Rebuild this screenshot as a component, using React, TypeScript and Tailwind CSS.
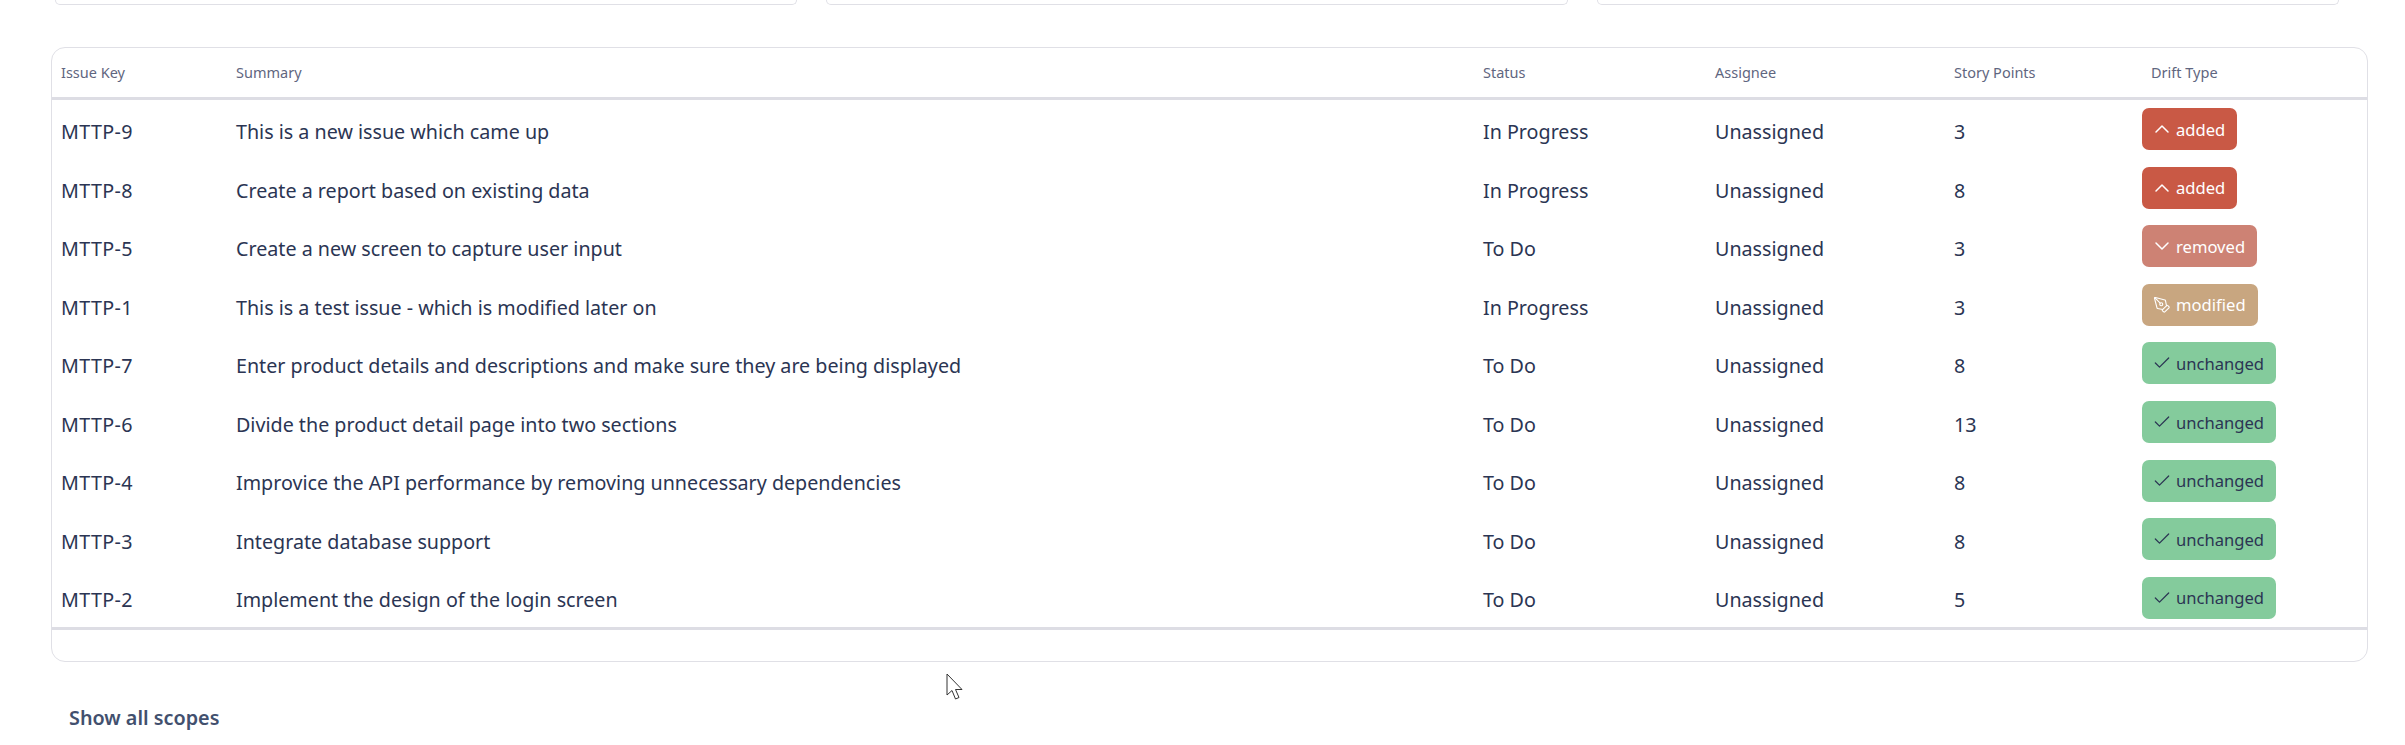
import { Check, ChevronDown, ChevronUp, PenTool } from "lucide-react";

type Drift = "added" | "removed" | "modified" | "unchanged";

const rows: { key: string; summary: string; status: string; points: number; drift: Drift }[] = [
  { key: "MTTP-9", summary: "This is a new issue which came up", status: "In Progress", points: 3, drift: "added" },
  { key: "MTTP-8", summary: "Create a report based on existing data", status: "In Progress", points: 8, drift: "added" },
  { key: "MTTP-5", summary: "Create a new screen to capture user input", status: "To Do", points: 3, drift: "removed" },
  { key: "MTTP-1", summary: "This is a test issue - which is modified later on", status: "In Progress", points: 3, drift: "modified" },
  { key: "MTTP-7", summary: "Enter product details and descriptions and make sure they are being displayed", status: "To Do", points: 8, drift: "unchanged" },
  { key: "MTTP-6", summary: "Divide the product detail page into two sections", status: "To Do", points: 13, drift: "unchanged" },
  { key: "MTTP-4", summary: "Improvice the API performance by removing unnecessary dependencies", status: "To Do", points: 8, drift: "unchanged" },
  { key: "MTTP-3", summary: "Integrate database support", status: "To Do", points: 8, drift: "unchanged" },
  { key: "MTTP-2", summary: "Implement the design of the login screen", status: "To Do", points: 5, drift: "unchanged" },
];

const columns = "grid grid-cols-[184px_1247px_232px_239px_188px_1fr] items-center";

function DriftBadge({ drift }: { drift: Drift }) {
  const styles: Record<Drift, string> = {
    added: "bg-[#c95945] text-white",
    removed: "bg-[#cd8274] text-white",
    modified: "bg-[#c8a680] text-white",
    unchanged: "bg-[#84cb9c] text-[#2b3553]",
  };
  return (
    <span className={`inline-flex h-[42px] items-center gap-[6px] rounded-[7px] px-[12px] text-[16.6px] ${styles[drift]}`}>
      <span className="flex w-[16px] items-center justify-center">
        {drift === "added" && <ChevronUp size={24} strokeWidth={1.5} className="shrink-0" />}
        {drift === "removed" && <ChevronDown size={24} strokeWidth={1.5} className="shrink-0" />}
        {drift === "modified" && <PenTool size={18} strokeWidth={1.5} className="shrink-0" />}
        {drift === "unchanged" && <Check size={20} strokeWidth={1.5} className="shrink-0" />}
      </span>
      <span className="pt-[2px]">{drift}</span>
    </span>
  );
}

export default function App() {
  return (
    <div className="relative h-[745px] overflow-hidden bg-white font-['Noto_Sans',sans-serif] text-[#2b3553]">
      <div className="flex h-[5px] gap-[29px] pl-[55px] pr-[66px]">
        {[0, 1, 2].map((i) => (
          <div key={i} className="flex-1 rounded-b-[14px] border-x border-b border-[#e0e0e6]" />
        ))}
      </div>

      <div className="ml-[51px] mt-[42px] h-[615px] w-[2317px] rounded-[14px] border border-[#e0e0e6]">
        <div className={`${columns} h-[52px] border-b-[3px] border-[#dddde4] text-[14.5px] text-[#5f6680]`}>
          <div className="pl-[9px] pt-[1px]">Issue Key</div>
          <div className="pt-[1px]">Summary</div>
          <div className="pt-[1px]">Status</div>
          <div className="pt-[1px]">Assignee</div>
          <div className="pt-[1px]">Story Points</div>
          <div className="pl-[9px] pt-[1px]">Drift Type</div>
        </div>
        <div className="border-b-[3px] border-[#dddde4] text-[19.7px]">
          {rows.map((r) => (
            <div key={r.key} className={`${columns} h-[58.55px]`}>
              <div className="pl-[9px] pt-[5px] tracking-[0.35px]">{r.key}</div>
              <div className="pt-[5px]">{r.summary}</div>
              <div className="pt-[5px]">{r.status}</div>
              <div className="pt-[5px]">Unassigned</div>
              <div className="pt-[5px]">{r.points}</div>
              <div>
                <DriftBadge drift={r.drift} />
              </div>
            </div>
          ))}
        </div>
      </div>

      <button className="ml-[69px] mt-[41px] text-[19.8px] font-semibold text-[#42506e]">Show all scopes</button>

      {/* mouse pointer left in the capture */}
      <svg className="absolute left-[946px] top-[673px]" width="20" height="30" viewBox="0 0 20 30">
        <path d="M1 1 L1 22 L6 17.5 L9.5 26 L13 24.5 L9.5 16.5 L16 16.5 Z" fill="#fff" stroke="#333" strokeWidth="1" />
      </svg>
    </div>
  );
}
